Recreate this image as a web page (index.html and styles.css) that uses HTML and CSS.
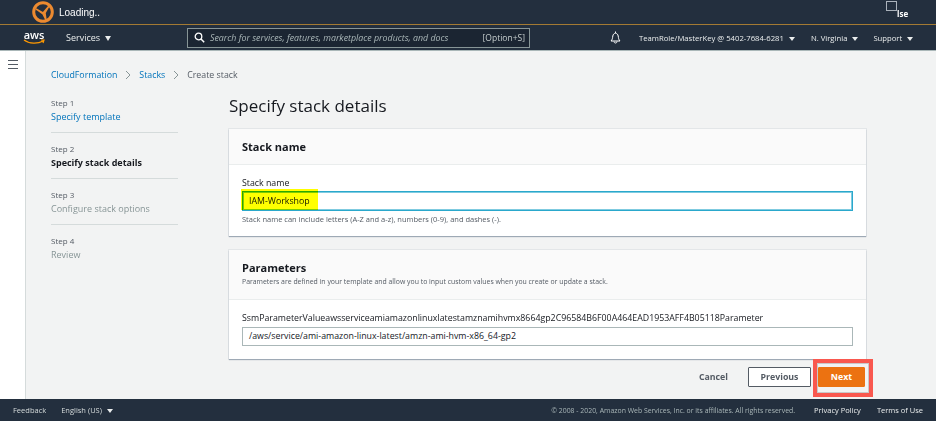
FILE: index.html
```html
<!DOCTYPE html>
<html lang="en">
<head>
    <meta charset="UTF-8">
    <title>Create stack</title>
    <link rel="stylesheet" href="styles.css">
</head>
<body>
    <div class="loading-bar">
        <svg class="logo" width="22" height="22" viewBox="0 0 22 22">
            <circle cx="11" cy="11" r="9.300" fill="none" stroke="#ec8a30" stroke-width="3"/>
            <path d="M4 8l7 4 6-7-4 7 1 7-3-6-7-5z" fill="#ec8a30" stroke="#ec8a30" stroke-width="1.5"/>
        </svg>
        <span class="loading-text">Loading..</span>
        <div class="close-mark"><span class="close-box"></span><span class="close-text">lse</span></div>
    </div>
    <nav class="navbar">
        <div class="aws-logo">
            <span class="aws-word">aws</span>
            <svg width="22" height="6" viewBox="0 0 22 6"><path d="M1 1c5 4 14 4 19 1M18 1l3 0-1 3" fill="none" stroke="#f90" stroke-width="1.2"/></svg>
        </div>
        <span class="nav-item services">Services <i class="caret caret-big"></i></span>
        <div class="search">
            <svg width="11" height="11" viewBox="0 0 11 11"><circle cx="4.5" cy="4.5" r="3.3" fill="none" stroke="#fff" stroke-width="1.3"/><path d="M7 7l3.2 3.2" stroke="#fff" stroke-width="1.5"/></svg>
            <span class="search-text">Search for services, features, marketplace products, and docs</span>
            <span class="search-key">[Option+S]</span>
        </div>
        <svg class="bell" width="13" height="13" viewBox="0 0 13 13"><path d="M2 10c1.500-1.500 1.500-3 1.800-5 .3-1.700 1.400-2.800 2.700-2.800S8.900 3.300 9.200 5c.3 2 .3 3.500 1.800 5zM5 10.500c0 2 3 2 3 0M6.500 .5v1.500" fill="none" stroke="#fff" stroke-width="1"/></svg>
        <span class="nav-item account">TeamRole/MasterKey @ 5402-7684-6281 <i class="caret"></i></span>
        <span class="nav-item region">N. Virginia <i class="caret"></i></span>
        <span class="nav-item support">Support <i class="caret"></i></span>
    </nav>
    <div class="page">
        <aside class="side-rail">
            <div class="burger"><span></span><span></span><span></span></div>
        </aside>
        <main class="content">
            <div class="crumbs">
                <a>CloudFormation</a>
                <svg width="6" height="10" viewBox="0 0 6 10"><path d="M1 1l4 4-4 4" fill="none" stroke="#879596"/></svg>
                <a>Stacks</a>
                <svg width="6" height="10" viewBox="0 0 6 10"><path d="M1 1l4 4-4 4" fill="none" stroke="#879596"/></svg>
                <span>Create stack</span>
            </div>
            <div class="columns">
                <ul class="steps">
                    <li><small>Step 1</small><a>Specify template</a></li>
                    <li><small>Step 2</small><b>Specify stack details</b></li>
                    <li><small>Step 3</small><span class="off">Configure stack options</span></li>
                    <li><small>Step 4</small><span class="off">Review</span></li>
                </ul>
                <div class="form">
                    <h1>Specify stack details</h1>
                    <section class="card">
                        <header class="card-head"><h2>Stack name</h2></header>
                        <div class="card-body name-body">
                            <label>Stack name</label>
                            <div class="input input-active">IAM-Workshop<span class="marker"></span></div>
                            <p class="hint">Stack name can include letters (A-Z and a-z), numbers (0-9), and dashes (-).</p>
                        </div>
                    </section>
                    <section class="card">
                        <header class="card-head params-head">
                            <h2>Parameters</h2>
                            <p class="hint">Parameters are defined in your template and allow you to input custom values when you create or update a stack.</p>
                        </header>
                        <div class="card-body params-body">
                            <label class="param-label">SsmParameterValueawsserviceamiamazonlinuxlatestamznamihvmx8664gp2C96584B6F00A464EAD1953AFF4B05118Parameter</label>
                            <div class="input param-input">/aws/service/ami-amazon-linux-latest/amzn-ami-hvm-x86_64-gp2</div>
                        </div>
                    </section>
                    <div class="actions">
                        <a class="cancel">Cancel</a>
                        <button class="btn">Previous</button>
                        <button class="btn btn-next">Next<span class="red-box"></span></button>
                    </div>
                </div>
            </div>
        </main>
    </div>
    <footer class="footer">
        <span>Feedback</span>
        <span class="lang">English (US) <i class="caret"></i></span>
        <span class="copy">© 2008 - 2020, Amazon Web Services, Inc. or its affiliates. All rights reserved.</span>
        <span class="policy">Privacy Policy</span>
        <span class="terms">Terms of Use</span>
    </footer>
</body>
</html>
```

FILE: styles.css
```css
* { box-sizing: border-box; }
html, body { margin: 0; height: 422px; overflow: hidden; }
body { font-family: "Open Sans", "Liberation Sans", sans-serif; font-size: 9px; color: #16191f; background: #fff; display: flex; flex-direction: column; }

.loading-bar { height: 25px; flex: none; background: #232f3e; border-bottom: 1px solid #a37a33; display: flex; align-items: center; padding-left: 32px; }
.loading-text { font-family: "Liberation Sans", sans-serif; font-size: 10px; color: #fff; margin-left: 5px; }
.close-mark { margin-left: auto; margin-right: 26px; width: 24px; height: 24px; position: relative; }
.close-box { position: absolute; left: 0; top: 1px; width: 11px; height: 10px; border: 1px solid #aab2bb; }
.close-text { position: absolute; left: 11px; top: 8px; color: #fff; font-size: 8px; font-weight: 700; }

.navbar { height: 26px; flex: none; background: #232f3e; color: #eaeded; display: flex; align-items: center; border-bottom: 1px solid #aab7b8; }
.aws-logo { width: 22px; margin-left: 23px; display: flex; flex-direction: column; align-items: center; color: #fff; }
.aws-word { font-size: 11px; line-height: 8px; font-weight: 600; }
.aws-logo svg { display: block; }
.nav-item { white-space: nowrap; font-size: 7.700px; }
.services { font-size: 9px; margin-left: 21px; width: 105px; }
.caret { display: inline-block; width: 0; height: 0; border-left: 3px solid transparent; border-right: 3px solid transparent; border-top: 4px solid #eaeded; margin-left: 3px; }
.caret-big { border-left-width: 3.500px; border-right-width: 3.500px; border-top-width: 5px; }
.search { margin-left: 16px; width: 343px; height: 20px; background: #1b2532; border: 1px solid #879596; display: flex; align-items: center; padding: 0 4px 0 6px; }
.search-text { font-style: italic; color: #aab7b8; font-size: 8.830px; margin-left: 5px; }
.search-key { margin-left: auto; color: #c4cccc; font-size: 8.500px; }
.bell { margin-left: 79px; }
.account { margin-left: 17px; }
.region { margin-left: 16px; }
.support { margin-left: 15px; }

.page { flex: 1; display: flex; min-height: 0; }
.side-rail { width: 26px; flex: none; background: #fff; border-right: 1px solid #d5dbdb; padding: 9px 0 0 8px; }
.burger span { display: block; width: 10px; height: 1px; background: #545b64; margin-bottom: 3px; }
.content { flex: 1; background: #f2f3f3; padding: 17px 70px 0 25px; }
.crumbs { display: flex; align-items: center; gap: 8px; height: 13px; font-size: 8.800px; color: #545b64; }
.crumbs a, .steps a { color: #0073bb; }

.columns { display: flex; margin-top: 6px; }
.steps { list-style: none; margin: 0; padding: 0; width: 127px; flex: none; }
.steps li { border-bottom: 1px solid #d5dbdb; height: 46px; padding-top: 9px; font-size: 9px; line-height: 13px; }
.steps li:last-child { border-bottom: 0; }
.steps small { display: block; font-size: 8px; color: #545b64; margin-bottom: 1px; }
.steps a, .steps b, .steps .off { display: block; }
.steps .off { color: #879596; }

.form { margin-left: 51px; flex: 1; min-width: 0; }
h1 { font-size: 17px; font-weight: 400; margin: 8px 0 0; height: 34px; line-height: 22px; }
.card { background: #fff; box-shadow: 0 1px 1px rgba(0, 31, 63, .3), 0 0 0 1px rgba(0, 31, 63, .06); margin-bottom: 14px; }
.card + .card { margin-bottom: 8px; }
.card-head { border-bottom: 1px solid #eaeded; background: #fafafa; padding: 0 13px; height: 36px; display: flex; flex-direction: column; justify-content: center; }
h2 { font-size: 11px; margin: 0; line-height: 14px; font-weight: 700; }
.card-body { padding: 0 13px; }
.name-body { height: 71px; padding-top: 12px; }
label { display: block; font-size: 8.800px; line-height: 13px; }
.input { height: 20px; margin-top: 1px; border: 1px solid #aab7b8; background: #fff; font-size: 8.800px; line-height: 18px; padding: 0 6px; position: relative; }
.input-active { border: 1px solid #2aa8cc; box-shadow: 0 0 0 1px #7fcbe0 inset; }
.marker { position: absolute; left: -2px; top: -3px; width: 77px; height: 21px; background: #ff0; mix-blend-mode: multiply; }
.hint { font-size: 7.500px; color: #545b64; margin: 3px 0 0; line-height: 11px; white-space: nowrap; }
.params-head { height: 50px; justify-content: flex-start; padding-top: 11px; }
.params-head .hint { margin-top: 1px; font-size: 6.900px; }
.params-body { height: 59px; padding-top: 12px; }
.param-input { margin-top: 2px; height: 19px; line-height: 17px; }
.param-label { white-space: nowrap; }
.actions { display: flex; align-items: center; justify-content: flex-end; height: 20px; padding-right: 1px; }
.cancel { font-weight: 700; color: #545b64; font-size: 8.800px; margin-right: 20px; }
.btn { font-family: inherit; font-size: 8.800px; font-weight: 700; height: 20px; padding: 0; width: 63px; background: #fff; border: 1px solid #545b64; color: #545b64; border-radius: 1px; }
.btn-next { width: 47px; margin-left: 7px; background: #ec7211; border-color: #ec7211; color: #fff; position: relative; }
.red-box { position: absolute; left: -6px; top: -9px; width: 60px; height: 38px; border: 4px solid #f9584f; box-shadow: 0 0 0 1px #c9c9c9 inset; }

.footer { height: 23px; flex: none; background: #232f3e; color: #d5dbdb; display: flex; align-items: center; padding: 0 13px; font-size: 7.500px; border-bottom: 1px solid #fff; }
.lang { margin-left: 15px; }
.copy { margin-left: auto; font-size: 6.900px; color: #aab7b8; }
.policy { margin-left: 19px; color: #eaeded; }
.terms { margin-left: 16px; color: #eaeded; }
```
